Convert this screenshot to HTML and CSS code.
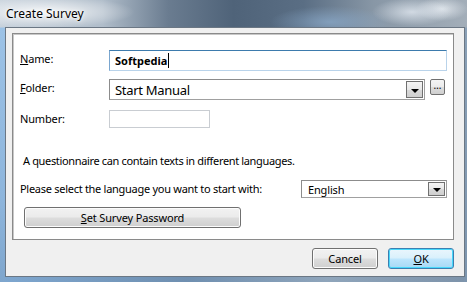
FILE: index.html
```html
<!DOCTYPE html>
<html>
<head>
<meta charset="utf-8">
<link rel="stylesheet" href="styles.css">
</head>
<body>
<div class="window">
  <div class="titlebar"><span class="title">Create Survey</span></div>
  <div class="client">
    <div class="panel">
      <div class="row r1">
        <label class="lbl up"><u>N</u>ame:</label>
        <div class="textbox focused"><span class="val">Softpedia</span><span class="caret"></span></div>
      </div>
      <div class="row r2">
        <label class="lbl up"><u>F</u>older:</label>
        <div class="combo folder"><span class="cval">Start Manual</span><span class="dd"><span class="arrow"></span></span></div>
        <div class="browse">…</div>
      </div>
      <div class="row r3">
        <label class="lbl">Number:</label>
        <div class="textbox number"></div>
      </div>
      <p class="info">A questionnaire can contain texts in different languages.</p>
      <div class="row r4">
        <label class="lbl wide">Please select the language you want to start with:</label>
        <div class="combo lang"><span class="cval">English</span><span class="dd"><span class="arrow"></span></span></div>
      </div>
      <div class="btn pwd"><u>S</u>et Survey Password</div>
    </div>
    <div class="buttons">
      <div class="btn">Cancel</div>
      <div class="btn default"><u>O</u>K</div>
    </div>
  </div>
</div>
</body>
</html>
```

FILE: styles.css
```css
html, body {
  margin: 0;
  padding: 0;
}
body {
  width: 467px;
  height: 282px;
  overflow: hidden;
  font-family: "Noto Sans", "Open Sans", sans-serif;
  font-size: 11px;
  letter-spacing: -0.15px;
  color: #000;
  background:
    radial-gradient(ellipse 40px 14px at 412px 12px, rgba(225,232,240,0.8), rgba(225,232,240,0) 100%),
    radial-gradient(ellipse 26px 12px at 442px 9px, rgba(235,240,245,0.8), rgba(235,240,245,0) 100%),
    radial-gradient(ellipse 60px 16px at 330px 22px, rgba(140,172,205,0.7), rgba(140,172,205,0) 100%),
    linear-gradient(90deg, #c8d2dc 0%, #b0bdca 22%, #6a7c90 36%, #4f6379 50%, #5a6e84 65%, #8897a6 80%, #a3aeb9 100%);
}
.window {
  display: flex;
  flex-direction: column;
  height: 282px;
  background: linear-gradient(180deg, rgba(0,0,0,0) 0px, rgba(0,0,0,0) 27px, #9cc2e6 28px, #8db5dc 200px, #7fa6cd 282px) left top / 5px 282px no-repeat,
              linear-gradient(180deg, rgba(0,0,0,0) 0px, rgba(0,0,0,0) 27px, #8aa0b6 28px, #7d95ae 282px) right top / 3px 282px no-repeat,
              linear-gradient(90deg, #7ea7d0 0%, #6f8fb0 40%, #8fa5bb 70%, #7d93aa 100%) left bottom / 467px 5px no-repeat;
}
.titlebar {
  height: 27px;
  padding-left: 6px;
  display: flex;
  align-items: center;
  background: radial-gradient(ellipse 90px 16px at 45px 12px, rgba(255,255,255,0.85), rgba(255,255,255,0) 100%);
}
.title {
  font-size: 12px;
  letter-spacing: 0;
  color: #000;
  text-shadow: 0 0 6px #fff, 0 0 3px #fff;
  padding-bottom: 1px;
}
.client {
  margin: 0 2px 0 5px;
  height: 250px;
  box-sizing: border-box;
  border: 1px solid #6b7784;
  background: #f0f0f0;
  padding: 5px 10px 0 6px;
}
.panel {
  box-sizing: border-box;
  width: 442px;
  height: 207px;
  background: #fff;
  border: 1px solid #8a8a8a;
  box-shadow: inset 1px 1px 0 #c8c8c8;
  padding: 16px 0 0 7px;
}
.row {
  display: flex;
  align-items: center;
}
.lbl {
  width: 89px;
  flex: none;
  line-height: 16px;
}
.lbl.up {
  padding-bottom: 3px;
}
.lbl u { text-decoration: underline; text-underline-offset: 1px; }
.lbl.wide {
  width: 281px;
  white-space: nowrap;
  letter-spacing: -0.28px;
}
.r1 { height: 21px; }
.r2 { height: 21px; margin-top: 8px; }
.r3 { height: 18px; margin-top: 10px; }
.r4 { height: 18px; margin-top: 11px; }
.textbox {
  box-sizing: border-box;
  height: 21px;
  background: #fff;
  display: flex;
  align-items: center;
}
.textbox.focused {
  width: 338px;
  border: 1px solid #b9d3ea;
  border-top-color: #3d7bad;
  border-left-color: #7aa6cf;
  padding-left: 5px;
}
.val {
  font-weight: bold;
  font-size: 11px;
  letter-spacing: 0;
}
.caret {
  display: inline-block;
  width: 1px;
  height: 15px;
  background: #000;
  margin-left: 1px;
}
.textbox.number {
  width: 101px;
  height: 18px;
  border: 1px solid #c9cdd2;
}
.combo {
  box-sizing: border-box;
  display: flex;
  align-items: center;
  justify-content: space-between;
  background: #fff;
  border: 1px solid #a0a0a0;
  border-top-color: #8c8c8c;
  border-left-color: #8c8c8c;
}
.combo.folder {
  width: 316px;
  height: 21px;
  padding: 1px;
}
.combo.lang {
  width: 146px;
  height: 18px;
  padding: 1px;
}
.cval {
  padding-left: 5px;
}
.folder .cval { font-size: 13px; letter-spacing: -0.3px; padding-left: 4px; }
.dd {
  box-sizing: border-box;
  width: 17px;
  height: 100%;
  border: 1px solid #707070;
  background: linear-gradient(180deg, #f4f4f4 0%, #e8e8e8 50%, #d9d9d9 51%, #cfcfcf 100%);
  display: flex;
  align-items: center;
  justify-content: center;
}
.arrow {
  width: 0;
  height: 0;
  border-left: 4px solid transparent;
  border-right: 4px solid transparent;
  border-top: 4px solid #000;
  margin-top: 2px;
}
.browse {
  box-sizing: border-box;
  width: 15px;
  height: 16px;
  margin-left: 5px;
  align-self: flex-start;
  border: 1px solid #707070;
  border-radius: 2px;
  background: linear-gradient(180deg, #f4f4f4 0%, #ebebeb 50%, #dddddd 51%, #cfcfcf 100%);
  font-size: 10px;
  line-height: 10px;
  text-align: center;
  color: #000;
}
.info {
  margin: 25px 0 0 3px;
  line-height: 16px;
  letter-spacing: -0.35px;
}
.btn {
  box-sizing: border-box;
  height: 21px;
  width: 66px;
  border: 1px solid #707070;
  border-radius: 3px;
  background: linear-gradient(180deg, #f2f2f2 0%, #ebebeb 48%, #dddddd 52%, #cfcfcf 100%);
  box-shadow: inset 0 0 0 1px #fcfcfc;
  display: flex;
  align-items: center;
  justify-content: center;
  line-height: 16px;
}
.btn u { text-underline-offset: 1px; }
.btn.pwd {
  width: 217px;
  margin: 9px 0 0 4px;
}
.btn.default {
  border-color: #3c7fb1;
  box-shadow: inset 0 0 0 1px #48d8fb;
  background: linear-gradient(180deg, #eaf6fd 0%, #d9f0fc 48%, #bee6fd 52%, #a7d9f5 100%);
}
.buttons {
  display: flex;
  justify-content: flex-end;
  gap: 10px;
  margin-top: 8px;
}
```
